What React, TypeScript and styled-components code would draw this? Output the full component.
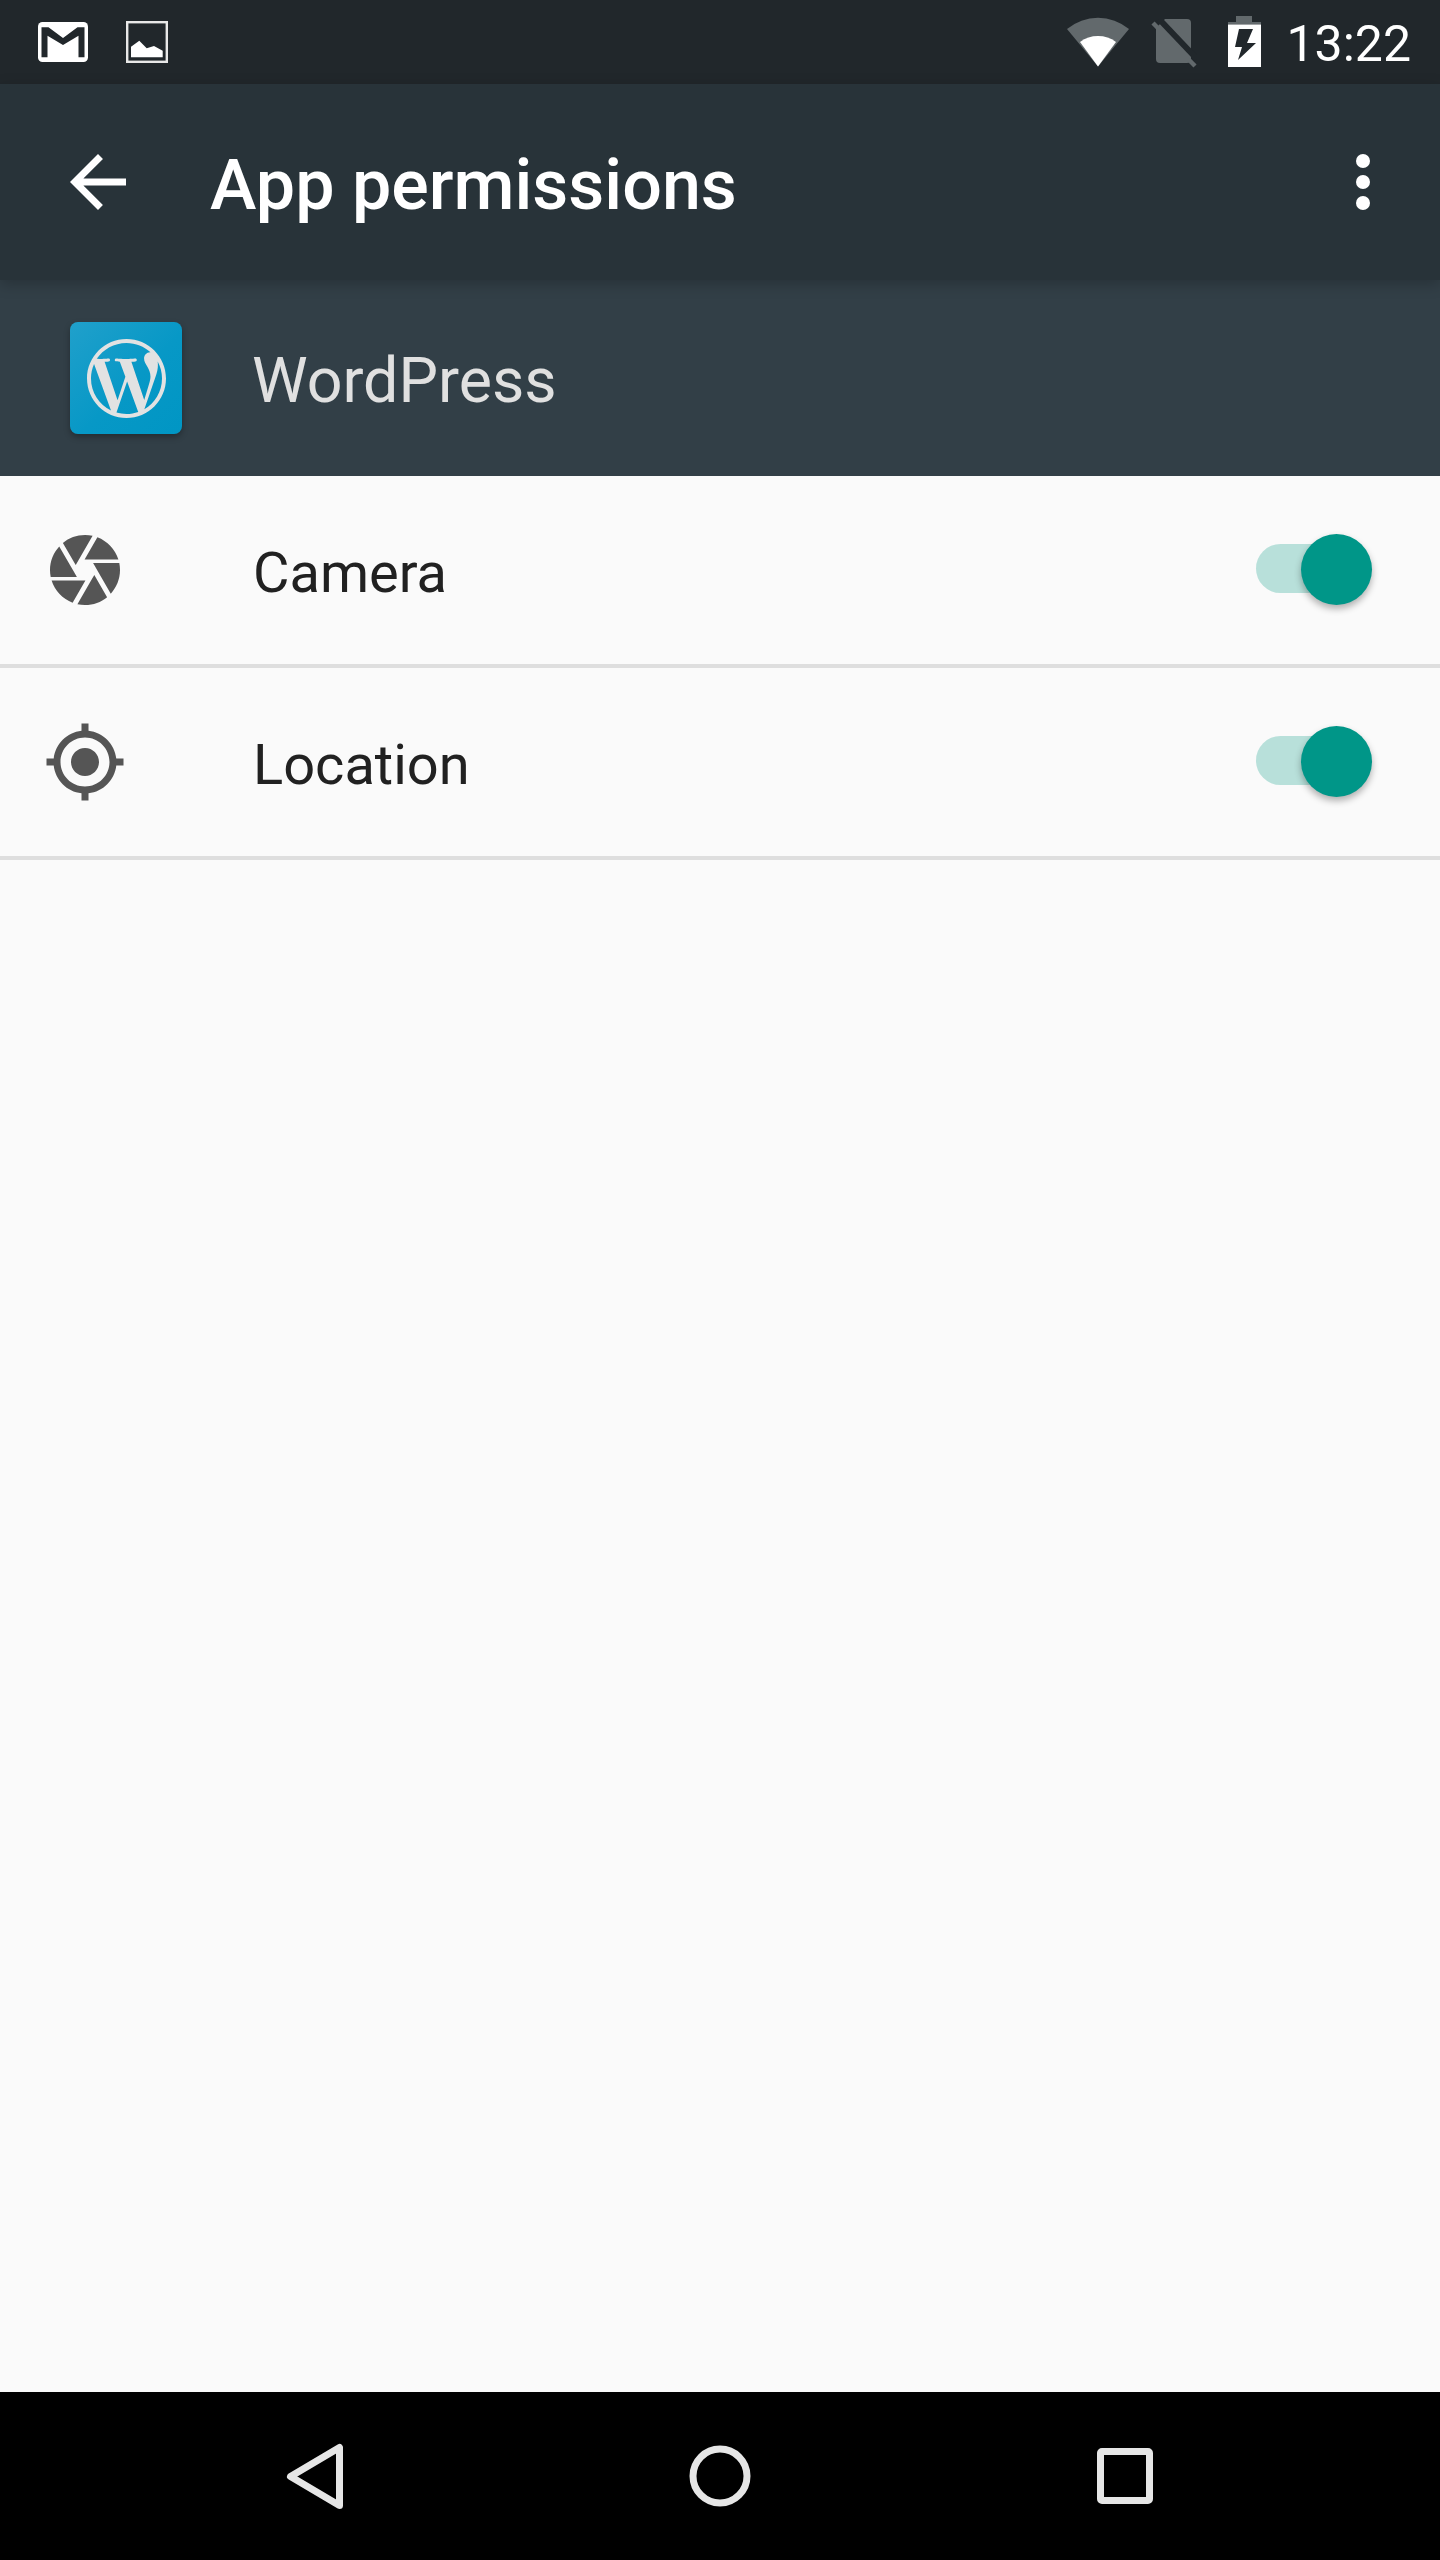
import React from "react";
import styled, { createGlobalStyle } from "styled-components";
import { SiWordpress } from "react-icons/si";

const GlobalStyle = createGlobalStyle`
  html, body { margin: 0; padding: 0; background: #fafafa; }
  * { box-sizing: border-box; }
`;

const Screen = styled.div`
  width: 1440px;
  height: 2560px;
  display: flex;
  flex-direction: column;
  background: #fafafa;
  font-family: Roboto, "Noto Sans", sans-serif;
  overflow: hidden;
`;

const StatusBar = styled.header`
  height: 84px;
  flex: none;
  display: flex;
  align-items: flex-start;
  padding-left: 38px;
  padding-right: 29px;
  background: #21272b;
  color: #fff;
`;

const Glyph = styled.svg<{ $left?: number; $top: number }>`
  display: block;
  flex: none;
  margin-left: ${(p) => p.$left ?? 0}px;
  margin-top: ${(p) => p.$top}px;
`;

const StatusRight = styled.div`
  margin-left: auto;
  display: flex;
  align-items: flex-start;
`;

const Clock = styled.span`
  margin-left: 25px;
  margin-top: 15px;
  font-size: 50px;
  line-height: 58px;
  font-weight: 400;
  color: #fff;
`;

const Toolbar = styled.div`
  position: relative;
  z-index: 1;
  height: 196px;
  flex: none;
  display: flex;
  align-items: center;
  padding: 0 35px 0 56px;
  background: #283339;
  box-shadow: 0 4px 14px rgba(0, 0, 0, 0.22);
`;

const ToolIcon = styled.svg`
  display: block;
  flex: none;
  width: 84px;
  height: 84px;
  fill: #fff;
`;

const Title = styled.h1`
  margin: 6px 0 0 70px;
  font-size: 70px;
  line-height: 84px;
  font-weight: 500;
  color: #fff;
`;

const Spacer = styled.div`
  flex: 1;
`;

const AppHeader = styled.div`
  height: 196px;
  flex: none;
  display: flex;
  align-items: center;
  padding-left: 70px;
  background: #323f47;
`;

const AppLogo = styled.div`
  width: 112px;
  height: 112px;
  flex: none;
  display: flex;
  align-items: center;
  justify-content: center;
  border-radius: 8px;
  background: linear-gradient(135deg, #20a0cb 0%, #0798c6 55%, #0096c4 100%);
  box-shadow: 0 3px 6px rgba(0, 0, 0, 0.3);
  color: #e2e2e2;
`;

const AppName = styled.span`
  margin: 6px 0 0 70px;
  font-size: 62.7px;
  line-height: 74px;
  font-weight: 400;
  color: #e0e0e0;
`;

const PermissionRow = styled.div`
  height: 192px;
  flex: none;
  display: flex;
  align-items: center;
  padding: 0 68px 0 43px;
  border-bottom: 4px solid #dedede;
`;

const RowIcon = styled.svg`
  display: block;
  flex: none;
  width: 84px;
  height: 84px;
  fill: #555;
`;

const RowLabel = styled.span`
  margin: 6px 0 0 126px;
  font-size: 56px;
  line-height: 66px;
  font-weight: 400;
  color: #212121;
`;

const Switch = styled.div`
  position: relative;
  margin: 0 0 2px auto;
  width: 116px;
  height: 71px;
  flex: none;
`;

const SwitchTrack = styled.div`
  position: absolute;
  left: 0;
  top: 10px;
  width: 104px;
  height: 49px;
  border-radius: 25px;
  background: #b8e0da;
`;

const SwitchThumb = styled.div`
  position: absolute;
  right: 0;
  top: 0;
  width: 71px;
  height: 71px;
  border-radius: 50%;
  background: #009688;
  box-shadow: 0 4px 7px rgba(0, 0, 0, 0.3);
`;

const NavBar = styled.nav`
  height: 168px;
  flex: none;
  display: flex;
  align-items: center;
  justify-content: center;
  gap: 321px;
  background: #000;
`;

const NavIcon = styled.svg`
  display: block;
  flex: none;
  width: 84px;
  height: 84px;
  fill: none;
  stroke: #e6e6e6;
  stroke-width: 7;
  stroke-linejoin: round;
`;

const Toggle = () => (
  <Switch>
    <SwitchTrack />
    <SwitchThumb />
  </Switch>
);

export default function App() {
  return (
    <Screen>
      <GlobalStyle />
      <StatusBar>
        {/* mail notification */}
        <Glyph $top={22} width={50} height={40} viewBox="0 0 50 40">
          <rect width="50" height="40" rx="4.5" fill="#fff" />
          <path
            d="M3.5 5.3h7L25 16 39.5 5.3h7v30h-6V13.7L25 23 9.5 13.7v21.6h-6z"
            fill="#21272b"
          />
        </Glyph>
        {/* picture notification */}
        <Glyph $left={38} $top={21} width={42} height={42} viewBox="0 0 42 42">
          <rect x="1.2" y="1.2" width="39.6" height="39.6" fill="none" stroke="#e8e8e8" strokeWidth="2.4" />
          <path d="M5 25.7l8.3-6 7.4 7.6 7.3-2.3 8.7 4.7v6.6H5z" fill="#fff" />
        </Glyph>
        <StatusRight>
          {/* wifi signal, two of four bars lit */}
          <Glyph $top={17} width={62} height={50} viewBox="0 0 62 50">
            <path d="M31 49.5L0 12A48.5 48.5 0 0 1 62 12z" fill="#62696c" />
            <path d="M31 49.5L13 25A30.5 30.5 0 0 1 49 25z" fill="#fff" />
          </Glyph>
          {/* no SIM */}
          <Glyph $left={22} $top={19} width={46} height={49} viewBox="0 0 46 49">
            <path d="M14 0h22a4 4 0 0 1 4 4v36a4 4 0 0 1-4 4H9a4 4 0 0 1-4-4V9z" fill="#62696c" />
            <path d="M8 0L46 40" stroke="#21272b" strokeWidth="6" fill="none" />
            <path d="M2 4L44 47" stroke="#62696c" strokeWidth="4.4" fill="none" />
          </Glyph>
          {/* charging battery */}
          <Glyph $left={31} $top={16} width={33} height={51} viewBox="0 0 33 51">
            <path d="M8 0h16v6H8z" fill="#62696c" />
            <path d="M0 6h33v2.5H0z" fill="#62696c" />
            <path d="M0 8.5h33V51H0z" fill="#fff" />
            <path d="M11 13h14l-6 14h9L10 44l4-13H7z" fill="#21272b" />
          </Glyph>
          <Clock>13:22</Clock>
        </StatusRight>
      </StatusBar>

      <Toolbar>
        <ToolIcon viewBox="0 0 24 24">
          <path d="M20 11H7.83l5.59-5.59L12 4l-8 8 8 8 1.41-1.41L7.83 13H20v-2z" />
        </ToolIcon>
        <Title>App permissions</Title>
        <Spacer />
        <ToolIcon viewBox="0 0 24 24">
          <circle cx="12" cy="6" r="2" />
          <circle cx="12" cy="12" r="2" />
          <circle cx="12" cy="18" r="2" />
        </ToolIcon>
      </Toolbar>

      <AppHeader>
        <AppLogo>
          <SiWordpress size={79} />
        </AppLogo>
        <AppName>WordPress</AppName>
      </AppHeader>

      <PermissionRow>
        <RowIcon viewBox="0 0 24 24">
          <path d="M9.4 10.5l4.77-8.26C13.47 2.09 12.75 2 12 2c-2.4 0-4.6.85-6.32 2.25l3.66 6.35.06-.1zM21.54 9c-.92-2.92-3.15-5.26-6-6.34L11.88 9h9.66zm.26 1h-7.49l.29.5 4.76 8.25C21 16.97 22 14.61 22 12c0-.69-.07-1.35-.2-2zM8.54 12l-3.9-6.75C3.01 7.03 2 9.39 2 12c0 .69.07 1.35.2 2h7.49l-1.15-2zm-6.08 3c.92 2.92 3.15 5.26 6 6.34L12.12 15H2.46zm11.27 0l-3.9 6.76c.7.15 1.42.24 2.17.24 2.4 0 4.6-.85 6.32-2.25l-3.66-6.35-.93 1.6z" />
        </RowIcon>
        <RowLabel>Camera</RowLabel>
        <Toggle />
      </PermissionRow>

      <PermissionRow>
        <RowIcon viewBox="0 0 24 24">
          <path d="M12 8c-2.21 0-4 1.79-4 4s1.79 4 4 4 4-1.79 4-4-1.79-4-4-4zm8.94 3c-.46-4.17-3.77-7.48-7.94-7.94V1h-2v2.06C6.83 3.52 3.52 6.83 3.06 11H1v2h2.06c.46 4.17 3.77 7.48 7.94 7.94V23h2v-2.06c4.17-.46 7.48-3.77 7.94-7.94H23v-2h-2.06zM12 19c-3.87 0-7-3.13-7-7s3.13-7 7-7 7 3.13 7 7-3.13 7-7 7z" />
        </RowIcon>
        <RowLabel>Location</RowLabel>
        <Toggle />
      </PermissionRow>

      <Spacer />

      <NavBar>
        <NavIcon viewBox="0 0 84 84">
          <path d="M17.5 42.5L66.5 13.5V71.5z" />
        </NavIcon>
        <NavIcon viewBox="0 0 84 84">
          <circle cx="42" cy="42" r="27" />
        </NavIcon>
        <NavIcon viewBox="0 0 84 84">
          <rect x="17.5" y="17.5" width="49" height="49" rx="1.5" />
        </NavIcon>
      </NavBar>
    </Screen>
  );
}
